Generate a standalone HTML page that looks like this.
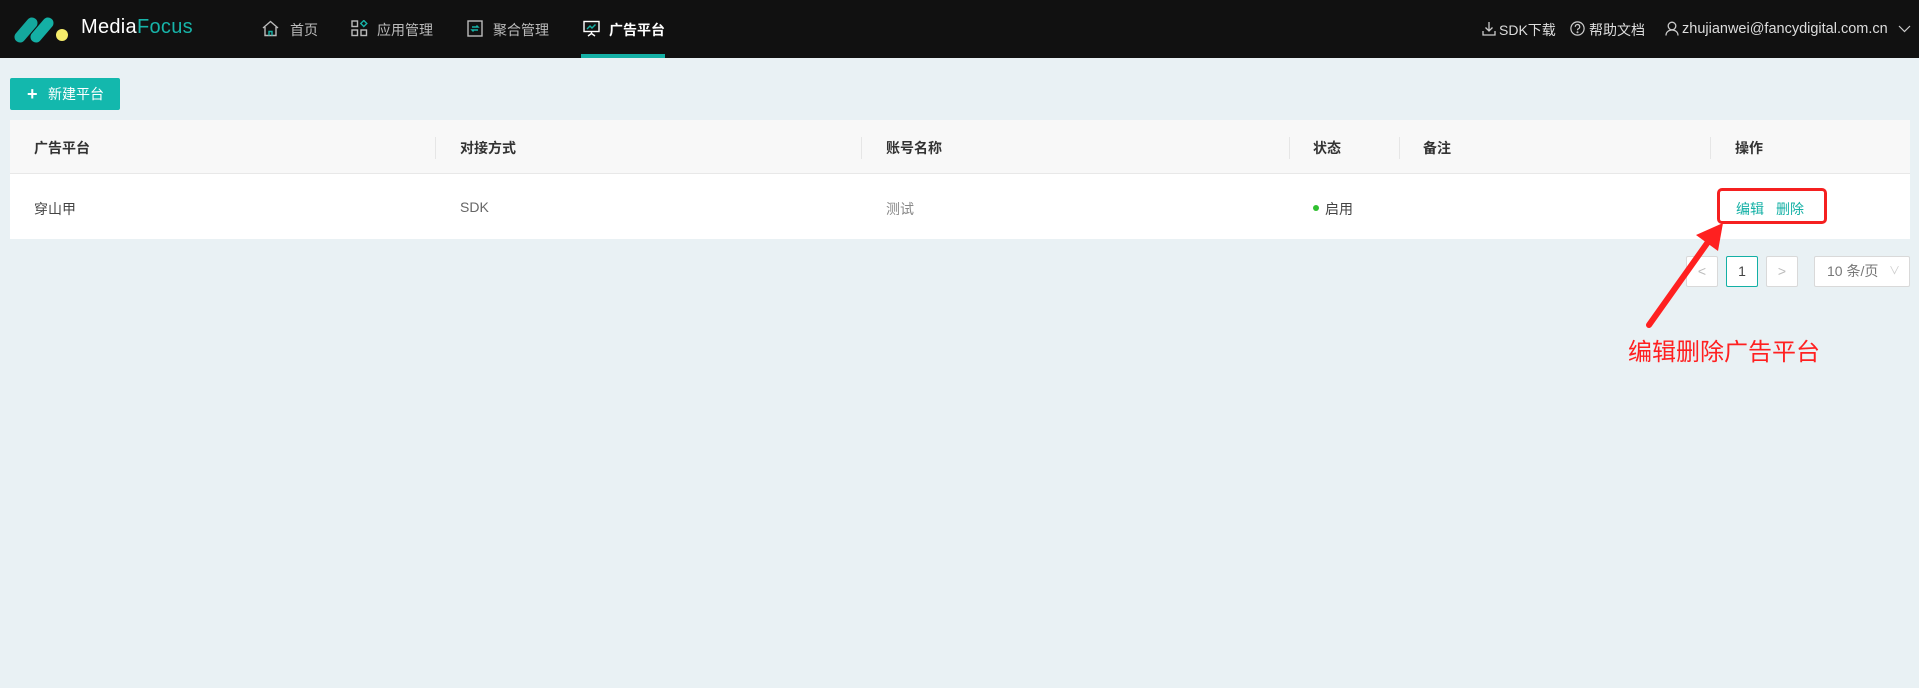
<!DOCTYPE html>
<html><head><meta charset="utf-8"><style>
*{margin:0;padding:0;box-sizing:border-box}
body{width:1919px;height:688px;background:#e9f1f4;font-family:"Liberation Sans","Noto Sans CJK SC",sans-serif;position:relative;overflow:hidden;font-size:14px;color:#333}
.a{position:absolute;white-space:nowrap}
.nav{position:absolute;left:0;top:0;width:1919px;height:58px;background:#111}
.ni{color:#bbb;font-size:14px;top:20px}
.hd{color:#333;font-size:14px;top:138px;font-weight:bold}
.dv{position:absolute;top:137px;width:1px;height:22px;background:#e6e6e6}
.pg{position:absolute;top:256px;height:31px;background:#fff;border:1px solid #d9d9d9;border-radius:2px;color:#bbb;text-align:center;line-height:29px}
</style></head><body>
<div class="nav"></div>
<svg class="a" style="left:10px;top:14px" width="64" height="34" viewBox="0 0 64 34">
<line x1="10" y1="23" x2="22" y2="9" stroke="#14a89e" stroke-width="11" stroke-linecap="round"/>
<line x1="26" y1="23" x2="38" y2="9" stroke="#14b0a5" stroke-width="11" stroke-linecap="round"/>
<circle cx="52" cy="21" r="6" fill="#f5ec6a"/></svg>
<div class="a" style="left:81px;top:16px;font-size:20px;color:#fff;letter-spacing:0.3px">Media<span style="color:#17b3a8">Focus</span></div>
<svg class="a" style="left:262px;top:20px" width="17" height="17" viewBox="0 0 17 17" fill="none" stroke="#bbb" stroke-width="1.4"><path d="M1 8L8.5 1.5 16 8M3 7v8.5h11V7"/><path d="M7 15.5v-4h3v4" stroke="#17b3a8"/></svg>
<div class="a ni" style="left:290px">首页</div>
<svg class="a" style="left:351px;top:20px" width="17" height="17" viewBox="0 0 17 17" fill="none" stroke="#bbb" stroke-width="1.4"><rect x="1" y="1" width="5.5" height="5.5"/><rect x="1" y="10" width="5.5" height="5.5"/><rect x="10" y="10" width="5.5" height="5.5"/><path d="M12.8 0.5l3 3-3 3-3-3z" stroke="#17b3a8"/></svg>
<div class="a ni" style="left:377px">应用管理</div>
<svg class="a" style="left:467px;top:20px" width="16" height="17" viewBox="0 0 16 17" fill="none" stroke="#bbb" stroke-width="1.4"><rect x="1" y="1" width="14" height="15"/><path d="M5 7h6l-1.5-1.5M11 10H5l1.5 1.5" stroke="#17b3a8"/></svg>
<div class="a ni" style="left:493px">聚合管理</div>
<svg class="a" style="left:583px;top:20px" width="17" height="17" viewBox="0 0 17 17" fill="none" stroke="#fff" stroke-width="1.4"><rect x="1" y="1.5" width="15" height="10"/><path d="M8.5 11.5v2M5 16l3.5-2.5L12 16"/><path d="M4 9l3-3 2 2 3.5-3.5" stroke="#17b3a8"/></svg>
<div class="a ni" style="left:609px;color:#fff;font-weight:bold">广告平台</div>
<div class="a" style="left:581px;top:54px;width:84px;height:4px;background:#14b0a5"></div>
<svg class="a" style="left:1482px;top:21px" width="14" height="15" viewBox="0 0 14 15" fill="none" stroke="#ccc" stroke-width="1.3"><path d="M7 1v9M3.5 6.5L7 10l3.5-3.5M1 10v4h12v-4"/></svg>
<div class="a ni" style="left:1499px;color:#ddd;font-size:14px">SDK下载</div>
<svg class="a" style="left:1570px;top:21px" width="15" height="15" viewBox="0 0 15 15" fill="none" stroke="#ccc" stroke-width="1.2"><circle cx="7.5" cy="7.5" r="6.6"/><path d="M5.3 5.8a2.2 2.2 0 1 1 3 2c-.6.3-.8.7-.8 1.4"/><circle cx="7.5" cy="11.2" r=".4"/></svg>
<div class="a ni" style="left:1589px;color:#ddd">帮助文档</div>
<svg class="a" style="left:1665px;top:21px" width="14" height="15" viewBox="0 0 14 15" fill="none" stroke="#ccc" stroke-width="1.3"><circle cx="7" cy="5" r="3.8"/><path d="M1 14.5c0-3.5 2.7-5.5 6-5.5s6 2 6 5.5"/></svg>
<div class="a ni" style="left:1682px;top:21px;color:#ddd;font-size:14.5px">zhujianwei@fancydigital.com.cn</div>
<svg class="a" style="left:1898px;top:25px" width="13" height="8" viewBox="0 0 13 8" fill="none" stroke="#ccc" stroke-width="1.2"><path d="M1 1l5.5 5.5L12 1"/></svg>

<div class="a" style="left:10px;top:78px;width:110px;height:32px;background:#13b8ad;border-radius:2px"></div>
<div class="a" style="left:27px;top:78px;color:#fff;font-size:18px;font-weight:bold;line-height:32px">+</div>
<div class="a" style="left:48px;top:78px;color:#fff;font-size:14px;line-height:32px">新建平台</div>

<div class="a" style="left:10px;top:120px;width:1900px;height:119px;background:#fff"></div>
<div class="a" style="left:10px;top:120px;width:1900px;height:54px;background:#f8f8f8;border-bottom:1px solid #e8e8e8"></div>
<div class="a hd" style="left:34px">广告平台</div>
<div class="dv" style="left:435px"></div><div class="a hd" style="left:460px">对接方式</div>
<div class="dv" style="left:861px"></div><div class="a hd" style="left:886px">账号名称</div>
<div class="dv" style="left:1289px"></div><div class="a hd" style="left:1313px">状态</div>
<div class="dv" style="left:1399px"></div><div class="a hd" style="left:1423px">备注</div>
<div class="dv" style="left:1710px"></div><div class="a hd" style="left:1735px">操作</div>
<div class="a" style="left:34px;top:199px;color:#444">穿山甲</div>
<div class="a" style="left:460px;top:199px;color:#666">SDK</div>
<div class="a" style="left:886px;top:199px;color:#888">测试</div>
<div class="a" style="left:1313px;top:205px;width:6px;height:6px;border-radius:50%;background:#30c030"></div>
<div class="a" style="left:1325px;top:199px;color:#444">启用</div>
<div class="a" style="left:1736px;top:199px;color:#13b0a5">编辑</div>
<div class="a" style="left:1776px;top:199px;color:#13b0a5">删除</div>
<div class="a" style="left:1717px;top:188px;width:110px;height:36px;border:3px solid #f52020;border-radius:5px"></div>

<div class="pg" style="left:1686px;width:32px">&lt;</div>
<div class="pg" style="left:1726px;width:32px;border-color:#13b0a5;color:#444">1</div>
<div class="pg" style="left:1766px;width:32px">&gt;</div>
<div class="pg" style="left:1814px;width:96px;color:#777;text-align:left;padding-left:12px">10 条/页 <span style="color:#ccc;font-size:11px;position:absolute;right:9px">∨</span></div>

<svg class="a" style="left:0;top:0" width="1919" height="688">
<line x1="1649" y1="325" x2="1708" y2="242" stroke="#ff2020" stroke-width="6" stroke-linecap="round"/>
<polygon points="1723,223 1696,235 1718,251" fill="#ff2020"/>
</svg>
<div class="a" style="left:1628px;top:332px;font-size:24px;color:#ff2020">编辑删除广告平台</div>
</body></html>
